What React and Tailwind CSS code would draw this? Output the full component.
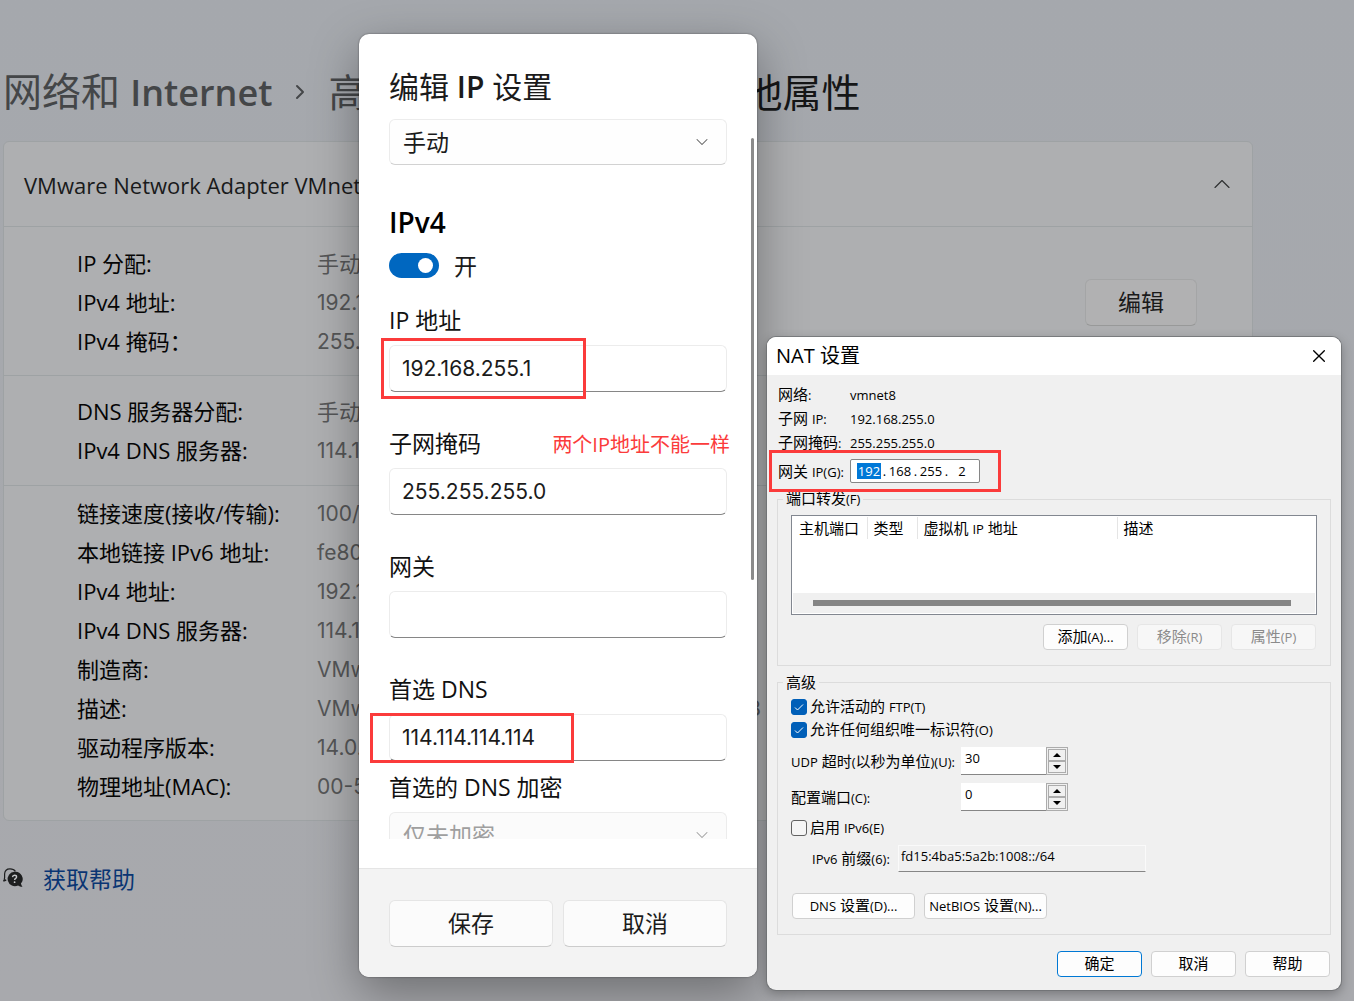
import React, { useState } from 'react';
import { ChevronDown, ChevronRight, ChevronUp, X } from 'lucide-react';

const sections = [
  {
    id: 'ip',
    className: 'pt-[17px] pb-[14px]',
    editable: true,
    rows: [
      ['IP 分配:', '手动'],
      ['IPv4 地址:', '192.168.255.1'],
      ['IPv4 掩码：', '255.255.255.0']
    ]
  },
  {
    id: 'dns',
    className: 'pt-4 pb-[15px]',
    rows: [
      ['DNS 服务器分配:', '手动'],
      ['IPv4 DNS 服务器:', '114.114.114.114']
    ]
  },
  {
    id: 'details',
    className: 'pt-2 pb-[14px]',
    rows: [
      ['链接速度(接收/传输):', '100/100 (Mbps)'],
      ['本地链接 IPv6 地址:', 'fe80::4ba5:5a2b:1008%8'],
      ['IPv4 地址:', '192.168.255.1'],
      ['IPv4 DNS 服务器:', '114.114.114.114'],
      ['制造商:', 'VMware, Inc.'],
      ['描述:', 'VMware Virtual Ethernet Adapter for VMnet8'],
      ['驱动程序版本:', '14.0.0.5'],
      ['物理地址(MAC):', '00-50-56-C0-00-08']
    ]
  }
];

const HelpIcon = () => (
  <svg viewBox="0 0 22 22" className="w-[22px] h-[22px] shrink-0" fill="none">
    <path d="M1.5 12.500C0.800 11.500 1.600 11 1.600 9.500V6C1.800 2.500 4 .8 7 .8c2.500 0 4.400 1 5.400 2.600" stroke="#1d1e1f" strokeWidth="1.200" />
    <path d="M0.300 13L3.200 12" stroke="#1d1e1f" strokeWidth="1.500" />
    <path d="M11.500 3.800a7.200 7.200 0 1 0 3.600 13.600c1.300 1 2.900 1.500 4.400 1.400-.8-.9-1.300-2-1.600-3.200A7.200 7.200 0 0 0 11.500 3.800z" fill="#1d1e1f" />
    <path d="M9.500 9.100c.1-1.200.9-1.900 2.100-1.900 1.200 0 2 .7 2 1.700 0 1.400-2 1.500-2 3.100" stroke="#c4c5c8" strokeWidth="1.400" />
    <circle cx="11.600" cy="14.200" r=".9" fill="#c4c5c8" />
  </svg>
);

const SettingsPage = () => (
  <main className="pl-[3px] pr-[101px]">
    <nav className="flex items-center pt-[66px] h-[141px] pb-[23px] text-[39px] leading-[52px] whitespace-nowrap">
      <a href="#network" className="text-[#444648]">
        网络和 <span className="text-[36px] font-semibold">Internet</span>
      </a>
      <ChevronRight className="w-6 h-6 mx-4 shrink-0 text-[#444648]" strokeWidth={2} />
      <a href="#advanced" className="text-[#444648]">高级网络设置</a>
      <ChevronRight className="w-6 h-6 mx-5 shrink-0 text-[#444648]" strokeWidth={2} />
      <h1 className="text-[#151617]">查看其他属性</h1>
    </nav>

    <div className="bg-[#aeafb1] border border-[#9ea2a4] rounded-md">
      <button className="w-full h-[84px] pl-5 pr-4 flex items-center justify-between text-[22px] text-[#191a1b]">
        <span className="pt-[2px]">VMware Network Adapter VMnet8</span>
        <ChevronUp className="w-7 h-7 text-[#303132]" strokeWidth={1} />
      </button>
      {sections.map((section) => (
        <section
          key={section.id}
          className={`border-t border-[#9ea2a4] pl-[73px] pr-[55px] flex items-center justify-between ${section.className}`}
        >
          <dl className="grid grid-cols-[240px_auto] auto-rows-[39px] text-[22px] leading-[39px] whitespace-nowrap">
            {section.rows.map(([label, value]) => (
              <React.Fragment key={label}>
                <dt className="text-[#050505]">{label}</dt>
                <dd className={`text-[#555657] ${value === '手动' ? '' : "font-['Inter'] text-[21px]"}`}>{value}</dd>
              </React.Fragment>
            ))}
          </dl>
          {section.editable && (
            <button className="w-28 h-[47px] border border-[#a4a5a6] border-b-[#989999] rounded-md bg-[#b1b1b2] text-[23px] text-[#1a1a1a]">
              编辑
            </button>
          )}
        </section>
      ))}
    </div>

    <div className="flex items-center h-10 mt-[38px] gap-[18px]">
      <HelpIcon />
      <a href="#help" className="text-[23px] leading-8 text-[#0a3573]">获取帮助</a>
    </div>
  </main>
);

const Field = ({ id, label, value, onChange }) => (
  <div className="flex flex-col gap-2">
    <label htmlFor={id} className="h-8 text-[23px] leading-[30px] text-[#111]">{label}</label>
    <input
      id={id}
      value={value}
      onChange={(e) => onChange(e.target.value)}
      className="w-full h-[47px] px-3 border border-[#ececec] border-b-[#868686] rounded-md bg-white font-['Inter'] text-[21px] text-[#1b1b1b] outline-none"
    />
  </div>
);

const SelectBox = ({ id, label, options, disabled }) => (
  <div className="grid items-center">
    <select
      id={id}
      aria-label={label}
      disabled={disabled}
      className="col-start-1 row-start-1 w-full h-[46px] px-[13px] appearance-none border border-[#ececec] border-b-[#d2d2d2] rounded-md bg-[#fefefe] text-[23px] text-[#1b1b1b] disabled:bg-[#fbfbfb] disabled:text-[#9f9f9f] disabled:opacity-100"
    >
      {options.map((option) => (
        <option key={option}>{option}</option>
      ))}
    </select>
    <ChevronDown
      className={`col-start-1 row-start-1 justify-self-end mr-[15px] w-5 h-5 pointer-events-none ${disabled ? 'text-[#9f9f9f]' : 'text-[#5c5c5c]'}`}
      strokeWidth={1.25}
    />
  </div>
);

const EditIpDialog = () => {
  const [enabled, setEnabled] = useState(true);
  const [form, setForm] = useState({
    ip: '192.168.255.1',
    mask: '255.255.255.0',
    gateway: '',
    dns: '114.114.114.114'
  });

  const update = (key) => (value) => setForm({ ...form, [key]: value });

  return (
    <div
      role="dialog"
      aria-labelledby="edit-ip-title"
      className="absolute left-[359px] top-[34px] w-[398px] rounded-[10px] bg-white overflow-clip shadow-[0_16px_48px_rgba(0,0,0,0.35),0_0_2px_rgba(0,0,0,0.5)]"
    >
      <div className="px-[30px] pt-[33px] pb-[29px]">
        <h2 id="edit-ip-title" className="text-[30px] leading-10 text-[#1b1b1b]">
          编辑 <span className="font-semibold">IP</span> 设置
        </h2>
        <div className="h-[720px] mt-3 overflow-hidden">
          <SelectBox id="mode" label="IP 设置" options={['手动', '自动(DHCP)']} />
          <h3 className="mt-10 h-9 text-[28px] leading-[34px] font-semibold text-black">IPv4</h3>
          <label className="flex items-center gap-[15px] mt-3 h-[25px] text-[23px] text-[#1b1b1b]">
            <input
              type="checkbox"
              role="switch"
              checked={enabled}
              onChange={(e) => setEnabled(e.target.checked)}
              className="appearance-none flex items-center w-[50px] h-[25px] px-[6px] rounded-full bg-[#8a8a8a] checked:bg-[#0067c0] checked:justify-end before:content-[''] before:w-[15px] before:h-[15px] before:rounded-full before:bg-white"
            />
            <span className="pt-[2px]">{enabled ? '开' : '关'}</span>
          </label>
          <div className="mt-[27px] flex flex-col gap-9">
            <Field id="ip" label="IP 地址" value={form.ip} onChange={update('ip')} />
            <Field id="mask" label="子网掩码" value={form.mask} onChange={update('mask')} />
            <Field id="gateway" label="网关" value={form.gateway} onChange={update('gateway')} />
            <Field id="dns" label="首选 DNS" value={form.dns} onChange={update('dns')} />
          </div>
          <div className="mt-[11px] flex flex-col gap-2">
            <label htmlFor="encryption" className="h-8 text-[23px] leading-[30px] text-[#111]">首选的 DNS 加密</label>
            <SelectBox id="encryption" label="首选的 DNS 加密" options={['仅未加密']} disabled />
          </div>
        </div>
      </div>
      <div className="grid grid-cols-2 gap-[10px] px-[30px] pt-[31px] pb-[30px] border-t border-[#e5e5e5] bg-[#f3f3f3]">
        {['保存', '取消'].map((text) => (
          <button key={text} className="h-[47px] border border-[#e5e5e5] border-b-[#cccccc] rounded-md bg-[#fbfbfb] text-[23px] text-[#1b1b1b]">
            {text}
          </button>
        ))}
      </div>

      {/* scroll thumb and red marks */}
      <div className="absolute right-[3px] top-[104px] w-[3px] h-[442px] rounded-full bg-[#8b8b8b]" />
      <div className="absolute left-[22px] top-[304px] w-[205px] h-[61px] border-3 border-[#fb3b3b]" />
      <div className="absolute left-[11px] top-[679px] w-[204px] h-[50px] border-3 border-[#fb3b3b]" />
      <p className="absolute right-[27px] top-[395px] text-[20px] leading-8 text-[#fb3b3b] whitespace-nowrap">两个IP地址不能一样</p>
    </div>
  );
};

// Latin runs are set smaller than the Chinese text around them
const Mixed = ({ children }) =>
  children.split(/([\x21-\x7e]+)/).map((part, index) =>
    index % 2 ? <span key={index} className="text-[13px] leading-none">{part}</span> : part
  );

const NatButton = ({ children, className = 'w-[85px]', primary, disabled }) => (
  <button
    disabled={disabled}
    className={`h-[26px] pb-[2px] border rounded text-[15px] leading-4 whitespace-nowrap bg-[#fdfdfd] disabled:bg-[#f7f7f7] disabled:border-[#e6e6e6] disabled:text-[#8b8b8b] ${primary ? 'border-[#0078d4]' : 'border-[#d0d0d0]'} ${className}`}
  >
    <Mixed>{children}</Mixed>
  </button>
);

const CheckRow = ({ label, defaultChecked }) => (
  <label className="flex items-center h-[23px] gap-[3px]">
    <span className="grid items-center justify-items-center">
      <input
        type="checkbox"
        defaultChecked={defaultChecked}
        className="peer col-start-1 row-start-1 appearance-none w-4 h-4 border border-[#626262] rounded-[3px] bg-[#f5f5f5] checked:bg-[#005fb8] checked:border-[#005fb8]"
      />
      <svg viewBox="0 0 16 16" className="col-start-1 row-start-1 w-4 h-4 pointer-events-none hidden peer-checked:block" fill="none" stroke="#fff">
        <path d="M4 8.500L6.500 11L12 5.500" />
      </svg>
    </span>
    <span className="leading-[22px] pb-px"><Mixed>{label}</Mixed></span>
  </label>
);

const Spinner = ({ id, label, value }) => (
  <div className="flex items-center">
    <label htmlFor={id} className="w-[170px] pb-px whitespace-nowrap"><Mixed>{label}</Mixed></label>
    <input
      id={id}
      defaultValue={value}
      className="w-[85px] h-7 px-1 pb-[5px] bg-white border-b border-[#868686] text-[13px] outline-none"
    />
    <div className="flex flex-col w-[22px] h-7 p-px border border-[#acacac] bg-[#f0f0f0]">
      <button aria-label="增加" className="flex-1 grid place-items-center border border-[#acacac]">
        <svg viewBox="0 0 8 4" className="w-2 h-1"><path d="M0 4L4 0L8 4z" /></svg>
      </button>
      <button aria-label="减少" className="flex-1 grid place-items-center border border-[#acacac]">
        <svg viewBox="0 0 8 4" className="w-2 h-1"><path d="M0 0L4 4L8 0z" /></svg>
      </button>
    </div>
  </div>
);

const NatDialog = () => {
  const info = [
    ['网络:', 'vmnet8'],
    ['子网 IP:', '192.168.255.0'],
    ['子网掩码:', '255.255.255.0']
  ];

  return (
    <div
      role="dialog"
      aria-labelledby="nat-title"
      className="absolute left-[767px] top-[337px] w-[574px] rounded-[9px] bg-[#f0f0f0] text-[15px] leading-6 text-black overflow-clip shadow-[0_0_0_1px_rgba(110,112,115,0.8),0_4px_12px_rgba(0,0,0,0.3)]"
    >
      <header className="flex items-center justify-between h-[38px] pl-[9px] pr-[14px] bg-white">
        <h2 id="nat-title" className="text-[20px]">NAT 设置</h2>
        <button aria-label="关闭"><X className="w-4 h-4" strokeWidth={1.5} viewBox="3 3 18 18" /></button>
      </header>

      <div className="pt-2 px-[10px] pb-[13px]">
        <dl className="grid grid-cols-[72px_auto] auto-rows-[24px] pl-px whitespace-nowrap">
          {info.map(([label, value]) => (
            <React.Fragment key={label}>
              <dt className="leading-[22px]"><Mixed>{label}</Mixed></dt>
              <dd className="text-[13px]">{value}</dd>
            </React.Fragment>
          ))}
        </dl>
        <div className="flex items-center h-6 mt-1 pl-px">
          <label htmlFor="octet-0" className="w-[72px] pb-px whitespace-nowrap"><Mixed>网关 IP(G):</Mixed></label>
          <div className="flex items-center w-[130px] h-6 pl-[6px] border border-[#868686] rounded-xs bg-white text-[13px]">
            {['192', '168', '255', '2'].map((octet, index) => (
              <React.Fragment key={octet}>
                {index > 0 && <span className="w-[7px] text-center">.</span>}
                <input
                  id={`octet-${index}`}
                  aria-label={`网关 IP ${index + 1}`}
                  defaultValue={octet}
                  className={`w-6 h-4 text-center outline-none ${index === 0 ? 'bg-[#0078d7] text-white' : ''}`}
                />
              </React.Fragment>
            ))}
          </div>
        </div>

        <fieldset className="mt-2 px-[13px] pt-2 pb-[15px] border border-[#dcdcdc]">
          <legend className="-ml-2 px-[3px] h-4 leading-[14px]"><Mixed>端口转发(F)</Mixed></legend>
          <div className="flex flex-col justify-between h-[100px] p-px border border-[#828790] bg-white">
            <table className="w-full table-fixed text-left leading-[22px]">
              <thead>
                <tr>
                  <th className="w-[74px] pl-[6px] border-r border-[#e5e5e5] font-normal whitespace-nowrap">主机端口</th>
                  <th className="w-[50px] pl-[6px] border-r border-[#e5e5e5] font-normal whitespace-nowrap">类型</th>
                  <th className="w-[200px] pl-[6px] border-r border-[#e5e5e5] font-normal"><Mixed>虚拟机 IP 地址</Mixed></th>
                  <th className="pl-[6px] font-normal">描述</th>
                </tr>
              </thead>
            </table>
            <div className="h-5 pt-[7px] pl-5 pr-6 bg-[#f0f0f0]">
              <div className="h-[6px] bg-[#858585]" />
            </div>
          </div>
          <div className="flex justify-end gap-[9px] mt-[9px] pr-px">
            <NatButton>添加(A)...</NatButton>
            <NatButton disabled>移除(R)</NatButton>
            <NatButton disabled>属性(P)</NatButton>
          </div>
        </fieldset>

        <fieldset className="mt-2 px-[13px] pt-[5px] pb-[15px] border border-[#dcdcdc]">
          <legend className="-ml-2 px-[3px] h-4 leading-4">高级</legend>
          <CheckRow label="允许活动的 FTP(T)" defaultChecked />
          <CheckRow label="允许任何组织唯一标识符(O)" defaultChecked />
          <div className="flex flex-col gap-2 mt-[6px]">
            <Spinner id="udp" label="UDP 超时(以秒为单位)(U):" value="30" />
            <Spinner id="port" label="配置端口(C):" value="0" />
          </div>
          <div className="mt-[5px]">
            <CheckRow label="启用 IPv6(E)" />
          </div>
          <div className="flex items-center mt-[6px] pl-[21px]">
            <label htmlFor="prefix" className="w-[86px] pb-[2px] whitespace-nowrap"><Mixed>IPv6 前缀(6):</Mixed></label>
            <input
              id="prefix"
              readOnly
              defaultValue="fd15:4ba5:5a2b:1008::/64"
              className="w-[248px] h-[27px] px-[2px] pb-[6px] border border-[#fafafa] border-b-[#868686] bg-[#f0f0f0] text-[13px] outline-none"
            />
          </div>
          <div className="flex gap-[9px] mt-[21px] pl-px">
            <NatButton className="w-[123px]">DNS 设置(D)...</NatButton>
            <NatButton className="w-[123px]">NetBIOS 设置(N)...</NatButton>
          </div>
        </fieldset>

        <footer className="flex justify-end gap-[9px] mt-4 pr-px">
          <NatButton primary>确定</NatButton>
          <NatButton>取消</NatButton>
          <NatButton>帮助</NatButton>
        </footer>
      </div>

      <div className="absolute left-[2px] top-[113px] w-[232px] h-[42px] border-3 border-[#fb3b3b]" />
    </div>
  );
};

export default function App() {
  return (
    <div className="relative min-h-screen overflow-hidden bg-linear-to-b from-[#a5a8ad] to-[#a8a9ad] font-['Open_Sans','Noto_Sans_CJK_SC',sans-serif]">
      <SettingsPage />
      <EditIpDialog />
      <NatDialog />
    </div>
  );
}
